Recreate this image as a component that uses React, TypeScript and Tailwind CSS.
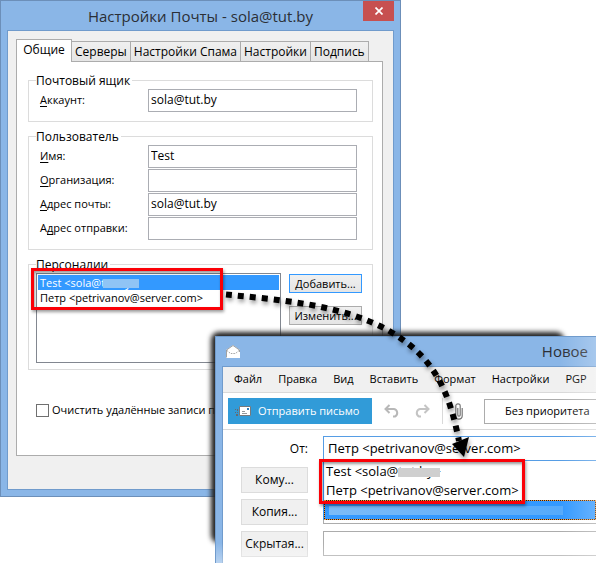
import type { ReactNode } from 'react'

const tabs = ['Серверы', 'Настройки Спама', 'Настройки', 'Подпись']

const userFields = [
  { id: 'name', key: 'И', rest: 'мя:', value: 'Test' },
  { id: 'org', key: 'О', rest: 'рганизация:', value: '' },
  { id: 'mail', key: 'А', rest: 'дрес почты:', value: 'sola@tut.by' },
  { id: 'reply', before: 'А', key: 'д', rest: 'рес отправки:', value: '' },
]

const menu = ['Файл', 'Правка', 'Вид', 'Вставить', 'Формат', 'Настройки', 'PGP']

type FieldProps = { id: string; before?: string; value: string; rest: string; mnemonic: string }

function Field({ id, before, mnemonic, rest, value }: FieldProps) {
  return (
    <div className="flex h-[23px] items-center">
      <label htmlFor={id} className="w-[108px] shrink-0 text-[11px]">
        {before}
        <u className="underline-offset-2">{mnemonic}</u>
        {rest}
      </label>
      <input
        id={id}
        defaultValue={value}
        className="h-full min-w-0 flex-1 border border-[#abadb3] bg-white px-0.5 pb-0.5 outline-none"
      />
    </div>
  )
}

function Group({ title, className, children }: { title: string; className: string; children: ReactNode }) {
  return (
    <section className={`relative border border-[#dcdcdc] ${className}`}>
      <h2 className="absolute -top-2 left-[7px] bg-white pr-0.5 leading-4">{title}</h2>
      {children}
    </section>
  )
}

function SettingsWindow() {
  return (
    <div className="absolute top-0 left-0 flex h-[497px] w-[401px] flex-col border border-[#6c8fb9] bg-[#8ab6e7] px-1.5 pb-1.5 text-xs">
      <header className="relative flex h-[29px] shrink-0 items-center justify-center">
        <h1 className="text-[15px] text-[#2b2f36]">Настройки Почты - sola@tut.by</h1>
        <button
          aria-label="Закрыть"
          className="absolute top-0 right-0 flex h-5 w-[31px] items-center justify-center bg-[#c75050]"
        >
          <svg width="8" height="8" viewBox="0 0 8 8" stroke="#fff" strokeWidth="1.7">
            <path d="M.5 .5l7 7M7.5 .5l-7 7" />
          </svg>
        </button>
      </header>

      <div className="flex flex-1 flex-col border border-[#709bcc] bg-[#f0f0f0] px-2 pt-2 pb-[33px]">
        <div className="z-10 -mb-px flex items-end">
          <button className="h-[23px] w-14 border border-b-0 border-[#acacac] bg-white pb-0.5">Общие</button>
          {tabs.map((tab) => (
            <button
              key={tab}
              className="h-[21px] border border-l-0 border-[#acacac] bg-gradient-to-b from-[#f0f0f0] to-[#e5e5e5] px-[3px] whitespace-nowrap"
            >
              {tab}
            </button>
          ))}
        </div>

        <div className="mr-0.5 flex-1 border border-[#acacac] bg-white pt-[18px] pr-[9px] pl-[11px]">
          <Group title="Почтовый ящик" className="h-[42px] pt-2 pr-[15px] pl-[11px]">
            <Field id="account" mnemonic="А" rest="ккаунт:" value="sola@tut.by" />
          </Group>

          <Group title="Пользователь" className="mt-3.5 flex h-[114px] flex-col gap-px pt-2 pr-[15px] pl-[11px]">
            {userFields.map((f) => (
              <Field key={f.id} id={f.id} before={f.before} mnemonic={f.key} rest={f.rest} value={f.value} />
            ))}
          </Group>

          <Group title="Персоналии" className="mt-3.5 flex h-[106px] gap-2 pt-2 pr-2.5 pl-[7px]">
            <ul role="listbox" aria-label="Персоналии" className="relative h-[90px] flex-1 border border-[#828790] bg-white p-px text-[11px] leading-[15px]">
              <li role="option" aria-selected="true" className="relative bg-[#3399ff] pl-0.5 text-white">
                Test &lt;sola@tut.by&gt;
                <span className="absolute top-1 left-[65px] h-[9px] w-[36px] bg-[#8fc4f5]" />
              </li>
              <li role="option" aria-selected="false" className="pl-0.5">
                Петр &lt;petrivanov@server.com&gt;
              </li>
            </ul>
            <div className="flex w-[73px] flex-col gap-[13px] pt-px text-[11px]">
              <button className="h-[19px] border border-[#3399ff] bg-gradient-to-b from-[#f0f0f0] to-[#e5e5e5] leading-4">
                Добавить...
              </button>
              <button className="h-[19px] border border-[#acacac] bg-gradient-to-b from-[#f0f0f0] to-[#e5e5e5] leading-4">
                Изменить...
              </button>
            </div>
          </Group>

          <label className="mt-[33px] ml-2 flex items-center gap-[3px] text-[11px] whitespace-nowrap">
            <input type="checkbox" className="size-[13px] appearance-none border border-[#707070] bg-white" />
            Очистить удалённые записи п
          </label>
        </div>
      </div>
    </div>
  )
}

function SendIcon() {
  return (
    <svg className="shrink-0" width="16" height="10" viewBox="0 0 16 10">
      <path d="M0 3h1v1H0zM2 3h1v2H2zM0 6h1v1H0zM2 6h1v1H2zM1 8h2v2H1z" fill="#626b73" />
      <path d="M4.500 .5h11v9h-11z" fill="#fff" stroke="#76797c" />
      <path d="M7 5h3v1H7zM7 7h5v1H7z" fill="#96999c" />
      <path d="M12 2h2v2h-2z" fill="#2b7dbd" />
    </svg>
  )
}

function ComposeWindow() {
  return (
    <>
      <div className="absolute top-[336px] right-[38px] bottom-[24px] left-[215px] rounded bg-black shadow-[0_0_5px_4px_#222]" />
      <div className="absolute top-[336px] right-0.5 bottom-0 left-[215px] isolate flex flex-col overflow-hidden border-t border-l border-[#709bcc] bg-[#8ab6e7] pl-1.5 text-[13px]">
        <header className="flex h-[29px] shrink-0 items-center justify-between pr-2 pl-1">
          <svg width="14" height="13" viewBox="0 0 14 13">
            <path d="M0 5L7 0l7 5v8H0z" fill="#fff" />
            <path d="M.5 12.500V5L7 .5 13.500 5v2" fill="none" stroke="#8a8a8a" strokeWidth=".8" />
            <path d="M1 5.500L4.500 8.500h5L13 5.500" fill="none" stroke="#a6a6a6" strokeDasharray="1.500 1" />
          </svg>
          <h1 className="text-[15px] text-[#2b2f36]">Новое</h1>
        </header>

        <div className="flex flex-1 flex-col border-t border-l border-[#709bcc] bg-white">
          <nav className="flex h-[26px] shrink-0 items-center gap-4 border-b border-[#d9d9d9] bg-[#f0f0f0] pl-[11px] text-[11px] whitespace-nowrap">
            {menu.map((item) => (
              <button key={item}>{item}</button>
            ))}
          </nav>

          <div className="flex h-[37px] shrink-0 items-center border-b border-[#d9d9d9] pl-[5px]">
            <button className="flex h-[26px] w-36 shrink-0 items-center gap-[7px] bg-[#319bd8] pl-[7px] text-[11px] whitespace-nowrap text-white">
              <SendIcon />
              Отправить письмо
            </button>
            <button aria-label="Отменить" className="ml-3">
              <svg width="16" height="14" viewBox="0 0 16 14" fill="none" stroke="#b8b8b8" strokeWidth="2">
                <path d="M5.500 1L1.500 5l4 4M2 5h8a4 4 0 0 1 1 7.500H9" />
              </svg>
            </button>
            <button aria-label="Повторить" className="ml-3.5">
              <svg width="16" height="14" viewBox="0 0 16 14" fill="none" stroke="#c4c4c4" strokeWidth="2">
                <path d="M10.500 1l4 4-4 4M14 5H6a4 4 0 0 0-1 7.500H7" />
              </svg>
            </button>
            <span className="ml-3 h-[26px] w-px bg-[#d9d9d9]" />
            <button aria-label="Вложить" className="ml-3">
              <svg width="8" height="17" viewBox="0 0 8 17" fill="none" stroke="#777" strokeWidth="1.200">
                <path d="M2.800 5v7a1.200 1.200 0 0 0 2.400 0V3a2.200 2.200 0 0 0-4.400 0v10a3.200 3.200 0 0 0 6.400 0V5" />
              </svg>
            </button>
            <button className="ml-[21px] flex h-[25px] flex-1 items-center border border-r-0 border-[#acacac] pl-5 text-[11px] whitespace-nowrap">
              Без приоритета
            </button>
          </div>

          <div className="grid grid-cols-[67px_1fr] gap-x-[15px] gap-y-1.5 pt-1.5 pl-[18px]">
            <label htmlFor="from" className="self-center text-right text-xs">
              От:
            </label>
            <div className="relative h-[25px]">
              <select
                id="from"
                className="h-full w-full appearance-none border border-r-0 border-[#569de5] bg-white pl-1 outline-none"
              >
                <option>Петр &lt;petrivanov@server.com&gt;</option>
              </select>
              <ul
                role="listbox"
                aria-label="От"
                className="absolute top-full right-0 left-0 z-10 border-l border-[#3399ff] bg-white pt-px leading-[19px]"
              >
                <li role="option" aria-selected="false" className="relative pl-0.5">
                  Test &lt;sola@tut.by&gt;
                  <span className="absolute top-1.5 left-[74px] h-[9px] w-[42px] bg-[#cfcfcf]" />
                </li>
                <li role="option" aria-selected="false" className="pl-0.5">
                  Петр &lt;petrivanov@server.com&gt;
                </li>
                <li
                  role="option"
                  aria-selected="true"
                  aria-label="Скрытый адрес"
                  className="h-5 border border-dotted border-[#ff9933] bg-[#222]"
                >
                  <div className="flex h-full items-center bg-[#3399ff] px-1">
                    <span className="mr-7 h-[9px] flex-1 bg-gradient-to-r from-[#7cbcf8] to-[#55aafb]" />
                  </div>
                </li>
              </ul>
            </div>

            <button className="h-[26px] border border-[#dcdcdc] bg-[#f0f0f0] text-xs">Кому...</button>
            <input aria-label="Кому" className="h-[25px] min-w-0 border border-r-0 border-[#acacac]" />
            <button className="h-[26px] border border-[#dcdcdc] bg-[#f0f0f0] text-xs">Копия...</button>
            <input aria-label="Копия" className="h-[25px] min-w-0 border border-r-0 border-[#acacac]" />
            <button className="h-[26px] border border-[#dcdcdc] bg-[#f0f0f0] text-xs">Скрытая...</button>
            <input aria-label="Скрытая" className="h-[25px] min-w-0 border border-r-0 border-[#acacac]" />
          </div>
        </div>

        <div className="pointer-events-none absolute inset-y-0 right-0 z-20 w-9 bg-gradient-to-r from-transparent to-white/25" />
        <div className="pointer-events-none absolute inset-x-0 bottom-0 z-20 h-5 bg-gradient-to-b from-transparent to-white/40" />
      </div>
    </>
  )
}

export default function App() {
  return (
    <main className="relative h-screen min-h-[563px] overflow-hidden bg-white font-['Open_Sans','Noto_Sans',sans-serif] text-black">
      <SettingsWindow />
      <ComposeWindow />

      <div className="pointer-events-none absolute top-[268px] left-[31px] z-30 h-[42px] w-48 border-3 border-[#fb0007] shadow-[1px_2px_3px_#0006,inset_1px_2px_3px_#0006]" />
      <div className="pointer-events-none absolute top-[459px] left-[319px] z-30 h-[45px] w-[206px] border-3 border-[#fb0007] shadow-[1px_2px_3px_#0006,inset_1px_2px_3px_#0006]" />
      <svg
        className="pointer-events-none absolute top-0 left-0 z-30 drop-shadow-[1px_3px_2px_#0006]"
        width="598"
        height="563"
        viewBox="0 0 598 563"
      >
        <path
          d="M226 294.500C282 300 345 305 391 332S450 396 459 441"
          fill="none"
          stroke="#000"
          strokeWidth="6"
          strokeDasharray="6 6"
        />
        <path d="M452 444L469 437 464 457z" />
      </svg>
    </main>
  )
}
